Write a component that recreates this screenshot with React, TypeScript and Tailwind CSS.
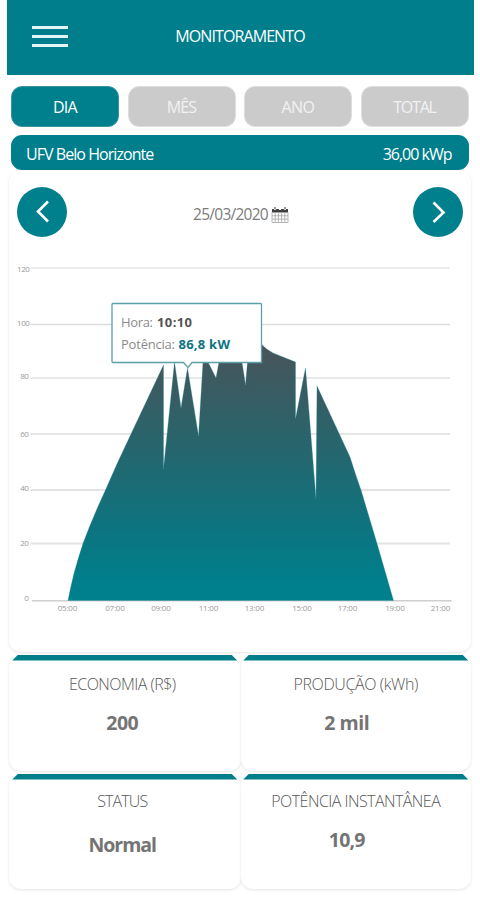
import React from "react";

const tabs = [
  { label: "DIA", active: true, spacing: "tracking-[-0.7px]" },
  { label: "MÊS", active: false, spacing: "tracking-[-0.9px]" },
  { label: "ANO", active: false, spacing: "tracking-[-0.5px]" },
  { label: "TOTAL", active: false, spacing: "tracking-[-1.2px]" },
];

const gridLines = [
  { value: "120", y: 98, label: 102, color: "#ececec", width: 2 },
  { value: "100", y: 154.5, label: 155.5, color: "#dcdcdc", width: 1.5 },
  { value: "80", y: 208, label: 209, color: "#e9e9e9", width: 2 },
  { value: "60", y: 264, label: 267, color: "#dedede", width: 1.5 },
  { value: "40", y: 320, label: 320.5, color: "#dadada", width: 1.5 },
  { value: "20", y: 373.5, label: 375.5, color: "#e4e4e4", width: 2 },
  { value: "0", y: 430.7, label: 431, color: "#cfcfcf", width: 1.5 },
];

const hours = [
  { label: "05:00", x: 58.5 },
  { label: "07:00", x: 106 },
  { label: "09:00", x: 152 },
  { label: "11:00", x: 199.5 },
  { label: "13:00", x: 245.5 },
  { label: "15:00", x: 293 },
  { label: "17:00", x: 338.5 },
  { label: "19:00", x: 386 },
  { label: "21:00", x: 431.5 },
];

function PowerChart() {
  return (
    <svg width="462" height="482" viewBox="0 0 462 482" className="block">
      <defs>
        <linearGradient id="power" gradientUnits="userSpaceOnUse" x1="0" y1="174" x2="0" y2="430">
          <stop offset="0" stopColor="#48545a" />
          <stop offset="0.35" stopColor="#2b636a" />
          <stop offset="0.72" stopColor="#0d747f" />
          <stop offset="0.92" stopColor="#007e8b" />
          <stop offset="1" stopColor="#00808d" />
        </linearGradient>
      </defs>
      {gridLines.map((g) => (
        <g key={g.value}>
          <line x1={g.value === "0" ? 23 : 21.5} x2={g.value === "0" ? 442.5 : 441} y1={g.y} y2={g.y} stroke={g.color} strokeWidth={g.width} />
          <text x={g.value.length === 3 ? 20.5 : 19.5} y={g.label} textAnchor="end" fontSize="8" letterSpacing="-0.4" fill="#999">{g.value}</text>
        </g>
      ))}
      <path
        d="M59 430.5 Q64 403 74 373.5 Q83 349 96.5 320 Q108 293 122 264 L154.5 195 L154.5 299 L165.5 192 L172 238 L178.5 198 L189.5 266 L194 192 L199 192 L207 208 L210 192 L233 192 L236.5 215 L238.5 192 L252 174 Q258 180 264 183 L286.5 192 L286.5 249 L296.5 198 L307 329 L308 216 L341 287 Q347 306 352 320 L368 373.5 L384.5 430.5 Z"
        fill="url(#power)"
        stroke="#1b8792"
        strokeOpacity="0.5"
        strokeWidth="0.6"
      />
      {hours.map((h) => (
        <text key={h.label} x={h.x} y="440.7" textAnchor="middle" fontSize="8" textLength="19.5" fill="#999">{h.label}</text>
      ))}
      <path
        d="M103.5 133.5 H251.5 Q252.5 133.5 252.5 134.5 V192.5 H183 L179 197.5 L174.5 192.5 H104 Q103 192.5 103 191.5 V134.5 Q103 133.5 104 133.5 Z"
        fill="#fff"
        stroke="#5e9fa7"
        strokeWidth="1.3"
      />
      <text x="112" y="157" fontSize="13" fill="#8a8a8a">
        <tspan textLength="32">Hora:</tspan>
      </text>
      <text x="148" y="157" fontSize="13" fontWeight="700" textLength="35" fill="#555">10:10</text>
      <text x="112" y="179" fontSize="13" textLength="54" fill="#8a8a8a">Potência:</text>
      <text x="169.5" y="179" fontSize="13" fontWeight="700" textLength="51.5" fill="#0b7480">86,8 kW</text>
    </svg>
  );
}

function CalendarIcon() {
  return (
    <svg width="18" height="18" viewBox="0 0 18 18" className="block">
      <path d="M1 3H17V6.5H1Z" fill="#3f3f3f" />
      <path d="M4 1V4M9 1.5V4M14 1V4" stroke="#fff" strokeWidth="2.2" />
      <path d="M4 1V3.5M14 1V3.5" stroke="#333" strokeWidth="1" />
      <path d="M1 6.5V16.5H17V6.5M1 9.8H17M1 13.1H17M4.2 6.5V16.5M7.4 6.5V16.5M10.6 6.5V16.5M13.8 6.5V16.5" fill="none" stroke="#999" strokeWidth="0.7" />
    </svg>
  );
}

function RoundButton({ next = false }: { next?: boolean }) {
  return (
    <button aria-label={next ? "Próximo" : "Anterior"} className="flex size-[50px] items-center justify-center rounded-full bg-[#007f8c]">
      <svg width="50" height="50" viewBox="0 0 50 50" className="block">
        <path d={next ? "M20.5 15.5L30.5 25.5L20.5 35" : "M31 14.5L21 24.5L31 34.5"} fill="none" stroke="#fff" strokeWidth="2.6" />
      </svg>
    </button>
  );
}

const stats = [
  { title: "ECONOMIA (R$)", value: "200", titleClass: "mt-[13px] mr-[5px] tracking-[-0.55px]", valueClass: "mt-[15px] mr-[5px] tracking-[-0.5px]" },
  { title: "PRODUÇÃO (kWh)", value: "2 mil", titleClass: "mt-[13px] tracking-[-0.4px]", valueClass: "mt-[15px] mr-[18px] tracking-[-0.5px]" },
  { title: "STATUS", value: "Normal", titleClass: "mt-[11px] mr-[5px] tracking-[-0.9px]", valueClass: "mt-[20px] mr-[5px] tracking-[-1px]" },
  { title: "POTÊNCIA INSTANTÂNEA", value: "10,9", titleClass: "mt-[11px] tracking-[-0.55px]", valueClass: "mt-[15px] mr-[18px] tracking-[-0.8px]" },
];

export default function App() {
  return (
    <div className="h-[900px] w-[480px] overflow-hidden bg-white font-['Open_Sans','Noto_Sans',sans-serif]">
      <header className="ml-[6.5px] grid h-[75px] w-[467px] grid-cols-3 items-center bg-[#007e8c] pb-[3px]">
        <button aria-label="Menu" className="ml-[25.5px] flex w-[36px] flex-col gap-[6px]">
          <span className="h-[3px] bg-[#e2f5f7]" />
          <span className="h-[3px] bg-[#e2f5f7]" />
          <span className="h-[3px] bg-[#e2f5f7]" />
        </button>
        <h1 className="text-center text-[16px] leading-5 tracking-[-0.9px] whitespace-nowrap text-white">MONITORAMENTO</h1>
      </header>

      <nav className="mt-[10.5px] ml-[11px] flex h-[41.5px] w-[457.5px] gap-[8.5px]">
        {tabs.map((t) => (
          <button
            key={t.label}
            className={`flex-1 rounded-[11px] border pt-[2px] text-[16px] ${t.spacing} ${t.active ? "border-[#38949f] bg-[#007f8c] text-white" : "border-[#dedede] bg-[#cbcbcb] text-[#f2f2f2]"}`}
          >
            {t.label}
          </button>
        ))}
      </nav>

      <div className="mt-[8px] ml-[11px] flex h-[34.5px] w-[457.5px] items-center justify-between rounded-[11px] bg-[#007e8b] pt-[3px] pr-[17px] pl-[15px] text-[16px] text-white">
        <span className="tracking-[-0.95px]">UFV Belo Horizonte</span>
        <span className="tracking-[-1px]">36,00 kWp</span>
      </div>

      <section className="mt-[0.5px] ml-[9px] grid h-[482px] w-[462px] rounded-[12px] bg-white shadow-[0_1px_3px_rgba(0,0,0,0.11)]">
        <div className="col-start-1 row-start-1">
          <PowerChart />
        </div>
        <div className="col-start-1 row-start-1 mx-[8px] mt-[16.5px] flex h-[50px] items-center justify-between">
          <RoundButton />
          <div className="mt-[6px] ml-[2px] flex items-center gap-[3px] text-[15.5px] tracking-[-0.75px] text-[#7c7c7c]">
            <span>25/03/2020</span>
            <CalendarIcon />
          </div>
          <RoundButton next />
        </div>
      </section>

      <main className="mt-[2.5px] ml-[9px] grid w-[462px] grid-cols-[231.5px_230.5px] grid-rows-[116px_115px] gap-y-[3px]">
        {stats.map((s) => (
          <article key={s.title} className="rounded-[12px] bg-white shadow-[0_1px_3px_rgba(0,0,0,0.11)]">
            <div className="mx-auto h-[6px] w-[225px] bg-[#007e8a] [clip-path:polygon(6px_0,219px_0,100%_100%,0_100%)]" />
            <h2 className={`text-center text-[16px] leading-5 font-light whitespace-nowrap text-[#585858] ${s.titleClass}`}>{s.title}</h2>
            <p className={`text-center text-[19.5px] leading-7 font-bold text-[#747474] ${s.valueClass}`}>{s.value}</p>
          </article>
        ))}
      </main>
    </div>
  );
}
